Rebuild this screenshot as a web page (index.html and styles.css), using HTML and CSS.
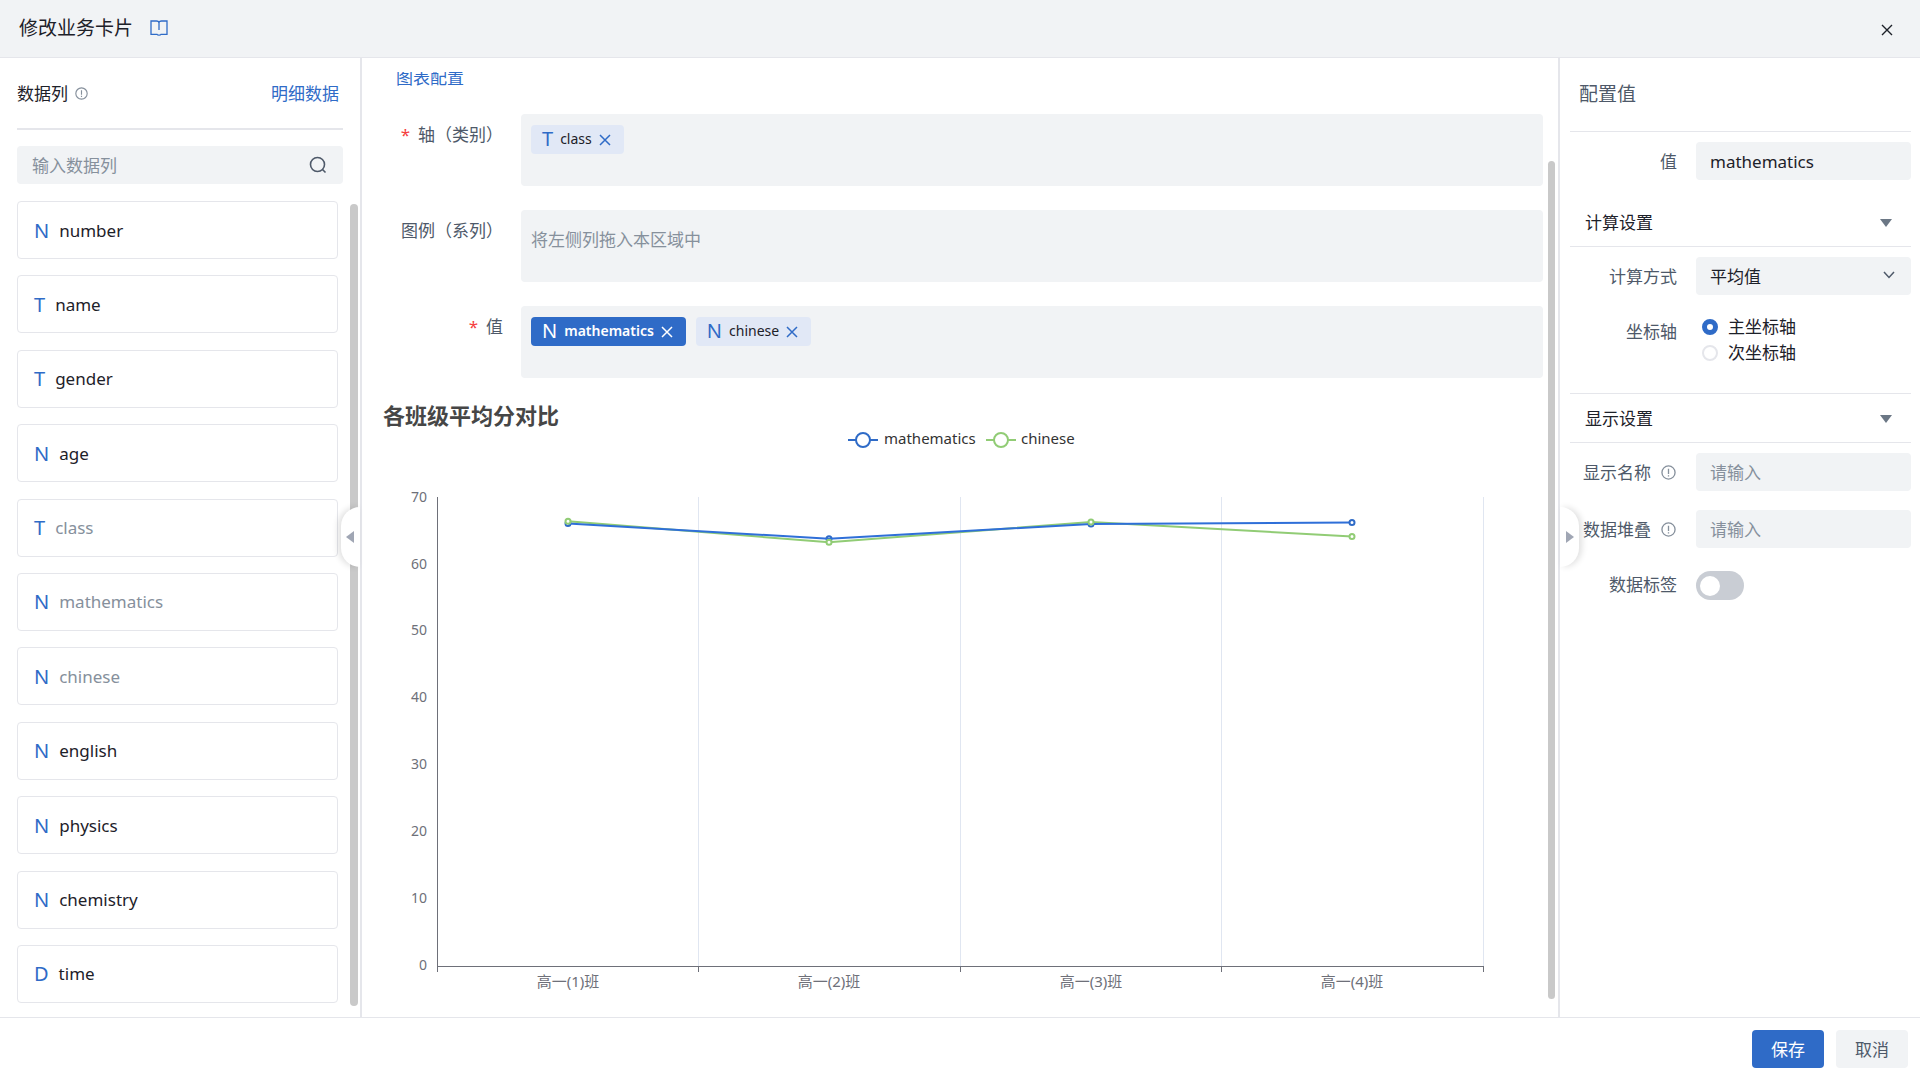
FILE: index.html
```html
<!DOCTYPE html>
<html lang="zh-CN">
<head>
    <meta charset="UTF-8">
    <meta name="viewport" content="width=device-width, initial-scale=1.0">
    <title>修改业务卡片</title>
    <link rel="stylesheet" href="styles.css">
</head>
<body>
    <header class="topbar">
        <h1>修改业务卡片</h1>
        <svg class="book-icon" width="18" height="16" viewBox="0 0 18 16" fill="none" stroke="#2f6bc7" stroke-width="1.3">
            <path d="M1 1H6.5Q9 1 9 3Q9 1 11.500 1H17V14.300H11Q10.500 15.200 9 15.200Q7.500 15.200 7 14.300H1Z M9 3V10" />
        </svg>
        <button class="close-button" aria-label="关闭">
            <svg width="12" height="12" viewBox="0 0 12 12" stroke="#1d2129" stroke-width="1.4"><path d="M1 1L11 11M11 1L1 11" /></svg>
        </button>
    </header>

    <div class="workspace">
        <aside class="columns-panel">
            <div class="columns-head">
                <h2>数据列</h2>
                <svg class="info-icon" width="13" height="13" viewBox="0 0 16 16" fill="none" stroke="#86909c" stroke-width="1.4"><circle cx="8" cy="8" r="7" /><path d="M8 4V9.500M8 10.800V12.300" /></svg>
                <a href="#">明细数据</a>
            </div>
            <div class="search-box">
                <input type="text" placeholder="输入数据列" aria-label="输入数据列">
                <svg width="18" height="18" viewBox="0 0 18 18" fill="none" stroke="#4e5969" stroke-width="1.6"><circle cx="8.500" cy="8.500" r="7" /><path d="M13.500 13.500L16.500 16.500" /></svg>
            </div>
            <ul class="column-list">
                <li><span class="type">N</span>number</li>
                <li><span class="type">T</span>name</li>
                <li><span class="type">T</span>gender</li>
                <li><span class="type">N</span>age</li>
                <li class="used"><span class="type">T</span>class</li>
                <li class="used"><span class="type">N</span>mathematics</li>
                <li class="used"><span class="type">N</span>chinese</li>
                <li><span class="type">N</span>english</li>
                <li><span class="type">N</span>physics</li>
                <li><span class="type">N</span>chemistry</li>
                <li><span class="type">D</span>time</li>
            </ul>
            <div class="scroll-thumb"></div>
            <button class="handle" aria-label="收起数据列">
                <svg width="8" height="12" viewBox="0 0 8 12" fill="#a0a6b4"><path d="M0 6L8 0V12Z" /></svg>
            </button>
        </aside>

        <main class="chart-panel">
            <div class="section-link"><a href="#">图表配置</a></div>

            <div class="drop-row">
                <div class="drop-label"><span class="required">*</span>轴（类别）</div>
                <div class="drop-zone">
                    <div class="tag">
                        <span class="type">T</span><span>class</span>
                        <button aria-label="移除 class"><svg width="12" height="12" viewBox="0 0 12 12"><path d="M1 1L11 11M11 1L1 11" /></svg></button>
                    </div>
                </div>
            </div>
            <div class="drop-row">
                <div class="drop-label">图例（系列）</div>
                <div class="drop-zone">
                    <span class="drop-hint">将左侧列拖入本区域中</span>
                </div>
            </div>
            <div class="drop-row">
                <div class="drop-label"><span class="required">*</span>值</div>
                <div class="drop-zone">
                    <div class="tag active">
                        <span class="type">N</span><span>mathematics</span>
                        <button aria-label="移除 mathematics"><svg width="12" height="12" viewBox="0 0 12 12"><path d="M1 1L11 11M11 1L1 11" /></svg></button>
                    </div>
                    <div class="tag">
                        <span class="type">N</span><span>chinese</span>
                        <button aria-label="移除 chinese"><svg width="12" height="12" viewBox="0 0 12 12"><path d="M1 1L11 11M11 1L1 11" /></svg></button>
                    </div>
                </div>
            </div>

            <svg class="chart" viewBox="0 0 1196 610">
                <text class="chart-title" x="21" y="26">各班级平均分对比</text>

                <g class="legend">
                    <g class="math"><path d="M486 42H516" /><circle cx="501" cy="42" r="7" /></g>
                    <text x="522" y="46">mathematics</text>
                    <g class="chin"><path d="M624 42H654" /><circle cx="639" cy="42" r="7" /></g>
                    <text x="659" y="46">chinese</text>
                </g>

                <path class="split" d="M336.500 99V568M598.500 99V568M859.500 99V568M1121.500 99V568" />
                <path class="axis" d="M75.500 99V574M75 568.500H1122M336.500 568V574M598.500 568V574M859.500 568V574M1121.500 568V574" />

                <g class="y-labels">
                    <text x="65" y="104">70</text>
                    <text x="65" y="171">60</text>
                    <text x="65" y="237">50</text>
                    <text x="65" y="304">40</text>
                    <text x="65" y="371">30</text>
                    <text x="65" y="438">20</text>
                    <text x="65" y="505">10</text>
                    <text x="65" y="572">0</text>
                </g>
                <g class="x-labels">
                    <text x="206" y="589">高一(1)班</text>
                    <text x="467" y="589">高一(2)班</text>
                    <text x="729" y="589">高一(3)班</text>
                    <text x="990" y="589">高一(4)班</text>
                </g>

                <g class="math">
                    <circle cx="206" cy="125.500" r="2.500" /><circle cx="467" cy="140.700" r="2.500" /><circle cx="729" cy="126" r="2.500" />
                </g>
                <g class="chin">
                    <polyline points="206,123.300 467,144.300 729,124 990,138.500" />
                </g>
                <g class="math">
                    <polyline points="206,125.500 467,140.700 729,126 990,124.500" />
                    <circle cx="990" cy="124.500" r="2.500" />
                </g>
                <g class="chin">
                    <circle cx="206" cy="123.300" r="2.500" /><circle cx="467" cy="144.300" r="2.500" /><circle cx="729" cy="124" r="2.500" /><circle cx="990" cy="138.500" r="2.500" />
                </g>
            </svg>
            <div class="scroll-thumb"></div>
        </main>

        <aside class="config-panel">
            <h2>配置值</h2>
            <div class="group">
                <div class="field">
                    <label for="value">值</label>
                    <input type="text" id="value" value="mathematics">
                </div>
            </div>

            <h3>计算设置<svg width="12" height="8" viewBox="0 0 12 8" fill="#6b7785"><path d="M0 0H12L6 8Z" /></svg></h3>
            <div class="group calc">
                <div class="field">
                    <label for="method">计算方式</label>
                    <div class="select-box">
                        <select id="method">
                            <option>平均值</option>
                        </select>
                        <svg width="12" height="8" viewBox="0 0 12 8" fill="none" stroke="#4e5969" stroke-width="1.5"><path d="M1 1L6 6.500L11 1" /></svg>
                    </div>
                </div>
                <div class="field top" role="radiogroup" aria-labelledby="axis-label">
                    <span class="field-label" id="axis-label">坐标轴</span>
                    <div class="radios">
                        <label><input type="radio" name="axis" checked>主坐标轴</label>
                        <label><input type="radio" name="axis">次坐标轴</label>
                    </div>
                </div>
            </div>

            <h3 class="ruled">显示设置<svg width="12" height="8" viewBox="0 0 12 8" fill="#6b7785"><path d="M0 0H12L6 8Z" /></svg></h3>
            <div class="group">
                <div class="field">
                    <label for="alias">显示名称<svg class="info-icon" width="15" height="15" viewBox="0 0 16 16" fill="none" stroke="#86909c" stroke-width="1.4"><circle cx="8" cy="8" r="7" /><path d="M8 4V9.500M8 10.800V12.300" /></svg></label>
                    <input type="text" id="alias" placeholder="请输入">
                </div>
                <div class="field">
                    <label for="stack">数据堆叠<svg class="info-icon" width="15" height="15" viewBox="0 0 16 16" fill="none" stroke="#86909c" stroke-width="1.4"><circle cx="8" cy="8" r="7" /><path d="M8 4V9.500M8 10.800V12.300" /></svg></label>
                    <input type="text" id="stack" placeholder="请输入">
                </div>
                <div class="field">
                    <label for="labels">数据标签</label>
                    <input type="checkbox" class="switch" id="labels">
                </div>
            </div>
            <button class="handle" aria-label="收起配置">
                <svg width="8" height="12" viewBox="0 0 8 12" fill="#a0a6b4"><path d="M8 6L0 0V12Z" /></svg>
            </button>
        </aside>
    </div>

    <footer class="actions">
        <button class="save">保存</button>
        <button class="cancel">取消</button>
    </footer>
</body>
</html>
```

FILE: styles.css
```css
* {
    box-sizing: border-box;
}

body {
    margin: 0;
    height: 100vh;
    display: flex;
    flex-direction: column;
    overflow: hidden;
    font-family: "Noto Sans", "Noto Sans CJK SC", sans-serif;
    font-size: 17px;
    line-height: 24px;
    color: #1d2129;
    background: #fff;
}

h1, h2, h3, ul {
    margin: 0;
    padding: 0;
    font-weight: 400;
}

button, input, select {
    font: inherit;
    color: inherit;
    border: none;
}

button {
    padding: 0;
    background: none;
    cursor: pointer;
}

a {
    color: #2f6bc7;
    text-decoration: none;
}

svg {
    display: block;
    flex: none;
}

input::placeholder {
    color: #86909c;
    opacity: 1;
}

/* header */
.topbar {
    display: flex;
    align-items: center;
    height: 58px;
    padding: 0 27px 2px 19px;
    background: #f1f3f5;
    border-bottom: 1px solid #e5e6eb;
}

.topbar h1 {
    font-size: 19px;
}

.book-icon {
    margin-left: 17px;
}

.close-button {
    margin-left: auto;
    padding-top: 4px;
}

.workspace {
    flex: 1;
    display: flex;
    min-height: 0;
}

/* left panel */
.columns-panel {
    position: relative;
    width: 362px;
    flex: none;
    display: flex;
    flex-direction: column;
    padding: 0 17px 14px;
    border-right: 2px solid #e5e6eb;
}

.columns-head {
    display: flex;
    align-items: center;
    height: 72px;
    padding: 2px 4px 0 0;
    border-bottom: 2px solid #e5e6eb;
}

.columns-head h2 {
    font-size: 17px;
}

.columns-head .info-icon {
    margin: 0 0 2px 7px;
}

.columns-head a {
    margin-left: auto;
}

.search-box {
    display: flex;
    align-items: center;
    height: 38px;
    margin: 16px 0 17px;
    padding-right: 16px;
    background: #f1f3f5;
    border-radius: 4px;
}

.search-box input {
    flex: 1;
    min-width: 0;
    padding: 2px 15px 0;
    background: none;
}

.column-list {
    flex: 1;
    display: flex;
    flex-direction: column;
    justify-content: space-between;
    margin-right: 5px;
    list-style: none;
}

.column-list li {
    display: flex;
    align-items: center;
    gap: 10px;
    height: 58px;
    padding: 1px 16px 0;
    border: 1px solid #e5e6eb;
    border-radius: 4px;
}

.column-list .used {
    color: #86909c;
}

.type {
    font-size: 20px;
    font-weight: 400;
    color: #2f6bc7;
}

.scroll-thumb {
    position: absolute;
    width: 8px;
    border-radius: 4px;
    background: #c9c9c9;
}

.columns-panel .scroll-thumb {
    top: 146px;
    right: 2px;
    bottom: 11px;
}

.handle {
    position: absolute;
    top: 449px;
    width: 19px;
    height: 60px;
    background: #fff;
}

.columns-panel .handle {
    right: 0;
    padding-left: 5px;
    border-radius: 20px 0 0 20px;
    box-shadow: -3px 0 6px rgba(0, 0, 0, 0.12);
}

/* middle */
.chart-panel {
    position: relative;
    flex: 1;
    min-width: 0;
    padding-top: 14px;
    overflow: hidden;
}

.section-link {
    display: flex;
    align-items: flex-end;
    height: 18px;
    margin: 0 0 24px 34px;
    overflow: hidden;
}

.drop-row {
    display: flex;
    gap: 18px;
    margin: 0 15px 24px 0;
}

.drop-label {
    width: 141px;
    line-height: 41px;
    color: #4e5969;
    text-align: right;
    white-space: nowrap;
}

.required {
    margin-right: 8px;
    color: #f53f3f;
}

.drop-zone {
    flex: 1;
    display: flex;
    align-items: flex-start;
    gap: 10px;
    height: 72px;
    padding: 11px 10px;
    background: #f1f3f5;
    border-radius: 4px;
}

.drop-hint {
    padding-top: 7px;
    color: #86909c;
}

.tag {
    display: flex;
    align-items: center;
    height: 29px;
    padding: 0 13px 2px 11px;
    font-size: 14px;
    background: #e1e8f6;
    border-radius: 4px;
}

.tag .type {
    margin-right: 7px;
}

.tag button {
    margin: 2px 0 0 7px;
}

.tag svg {
    fill: none;
    stroke: #2f6bc7;
    stroke-width: 1.5;
}

.tag.active {
    font-weight: 600;
    color: #fff;
    background: #2f6bc7;
}

.tag.active .type {
    color: #fff;
}

.tag.active svg {
    stroke: #fff;
}

/* chart */
.chart {
    width: 100%;
    margin-top: -4px;
    font-size: 14px;
}

.chart-title {
    font-size: 22px;
    font-weight: 700;
    fill: #464646;
}

.legend text {
    font-size: 15px;
    fill: #333;
}

.y-labels, .x-labels {
    fill: #6e7079;
}

.y-labels {
    text-anchor: end;
}

.x-labels {
    font-size: 15px;
    text-anchor: middle;
}

.axis {
    stroke: #6e7079;
}

.split {
    stroke: #e0e6f1;
}

.math, .chin {
    fill: none;
    stroke-width: 2;
}

.math {
    stroke: #2f6bc7;
}

.math polyline {
    stroke: #2f6fd8;
}

.chin {
    stroke: #91cc75;
}

.math circle, .chin circle {
    fill: #fff;
}

.chart-panel .scroll-thumb {
    top: 103px;
    right: 3px;
    bottom: 18px;
    width: 7px;
}

/* right panel */
.config-panel {
    position: relative;
    width: 362px;
    flex: none;
    padding: 0 9px 0 10px;
    border-left: 2px solid #e5e6eb;
}

.config-panel h2 {
    padding: 0 9px;
    font-size: 19px;
    line-height: 73px;
    border-bottom: 1px solid #e5e6eb;
    color: #4e5969;
}

.config-panel h3 {
    display: flex;
    align-items: center;
    justify-content: space-between;
    padding: 2px 19px 0 15px;
    font-size: 17px;
    line-height: 46px;
    border-bottom: 1px solid #e5e6eb;
}

.config-panel .ruled {
    border-top: 1px solid #e5e6eb;
}

.group {
    display: flex;
    flex-direction: column;
    gap: 19px;
    padding: 10px 0 18px;
}

.group.calc {
    padding-bottom: 28px;
}

.field {
    display: flex;
    align-items: center;
    gap: 19px;
    color: #4e5969;
}

.field.top {
    align-items: flex-start;
}

.field > label, .field-label {
    display: flex;
    align-items: center;
    justify-content: flex-end;
    width: 107px;
    flex: none;
    padding-top: 2px;
    white-space: nowrap;
}

.field .field-label {
    padding-top: 6px;
}

.field .info-icon {
    margin: 0 1px 2px 10px;
}

.field input[type="text"], .select-box select {
    flex: 1;
    min-width: 0;
    height: 38px;
    padding: 0 14px;
    background: #f1f3f5;
    border-radius: 4px;
    color: #1d2129;
}

.select-box {
    position: relative;
    flex: 1;
    display: flex;
}

.select-box select {
    appearance: none;
    padding-top: 2px;
}

.select-box svg {
    position: absolute;
    top: 14px;
    right: 16px;
    pointer-events: none;
}

.radios {
    display: flex;
    flex-direction: column;
    gap: 2px;
    padding: 1px 6px 0;
    color: #1d2129;
}

.radios label {
    display: flex;
    align-items: center;
    gap: 10px;
}

.radios input {
    appearance: none;
    width: 16px;
    height: 16px;
    margin: 0;
    border: 2px solid #e5e6eb;
    border-radius: 50%;
}

.radios input:checked {
    border: 5px solid #2f6bc7;
}

.switch {
    appearance: none;
    width: 48px;
    height: 29px;
    margin: 4px 0 0;
    padding: 5px 4px;
    background: #c9cdd4;
    border-radius: 15px;
}

.switch::before {
    content: "";
    display: block;
    width: 20px;
    height: 20px;
    background: #fff;
    border-radius: 50%;
}

.config-panel .handle {
    left: 0;
    padding-left: 6px;
    border-radius: 0 20px 20px 0;
    box-shadow: 3px 0 6px rgba(0, 0, 0, 0.12);
}

/* footer */
.actions {
    display: flex;
    justify-content: flex-end;
    align-items: center;
    gap: 12px;
    height: 63px;
    padding: 0 12px;
    border-top: 1px solid #e5e6eb;
}

.actions button {
    width: 72px;
    height: 38px;
    padding-top: 1px;
    border-radius: 4px;
}

.actions .save {
    color: #fff;
    background: #2f6bc7;
}

.actions .cancel {
    color: #4e5969;
    background: #f1f3f5;
}
```
